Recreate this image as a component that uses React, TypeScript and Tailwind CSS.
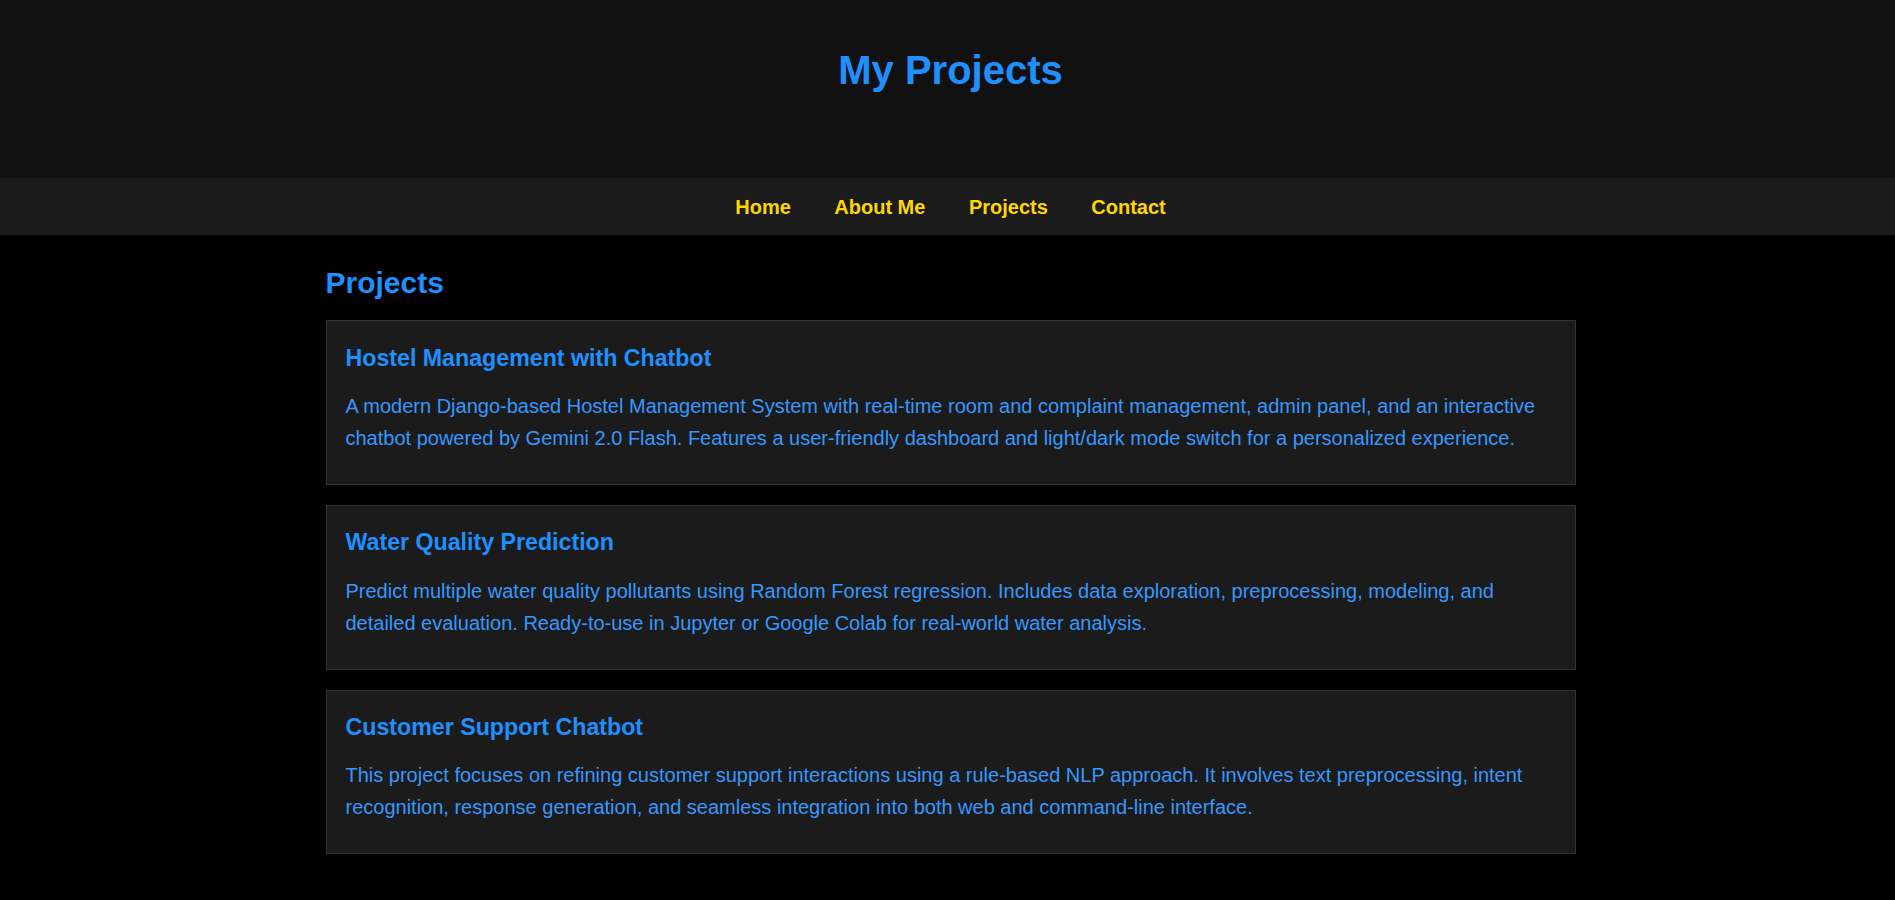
const projects = [
  {
    title: "Hostel Management with Chatbot",
    text: "A modern Django-based Hostel Management System with real-time room and complaint management, admin panel, and an interactive chatbot powered by Gemini 2.0 Flash. Features a user-friendly dashboard and light/dark mode switch for a personalized experience.",
  },
  {
    title: "Water Quality Prediction",
    text: "Predict multiple water quality pollutants using Random Forest regression. Includes data exploration, preprocessing, modeling, and detailed evaluation. Ready-to-use in Jupyter or Google Colab for real-world water analysis.",
  },
  {
    title: "Customer Support Chatbot",
    text: "This project focuses on refining customer support interactions using a rule-based NLP approach. It involves text preprocessing, intent recognition, response generation, and seamless integration into both web and command-line interface.",
  },
];

const links = ["Home", "About Me", "Projects", "Contact"];

export default function App() {
  return (
    <div className="min-h-[900px] bg-black font-['Liberation_Sans',Arial,sans-serif]">
      {/* Header */}
      <header className="h-[178px] bg-[#111111] pl-[6px] pt-[47px]">
        <h1 className="text-center text-[40px] font-bold leading-[46px] text-[#1e90ff]">
          My Projects
        </h1>
      </header>

      {/* Nav */}
      <nav className="flex h-[57px] items-center justify-center gap-[43.5px] bg-[#1b1b1b] pl-[6px]">
        {links.map((l) => (
          <a key={l} href="#" className="text-[20px] font-bold text-[#ffd700]">
            {l}
          </a>
        ))}
      </nav>

      {/* Projects */}
      <main className="pl-[6px] pb-[46px]">
        <div className="mx-auto w-[1250px] pt-[30.5px]">
          <h2 className="text-[30px] font-bold leading-[34.5px] text-[#1e90ff]">
            Projects
          </h2>
          <div className="mt-[20px] flex flex-col gap-[20px]">
            {projects.map((p) => (
              <div
                key={p.title}
                className="border border-[#333333] bg-[#1b1b1b] pl-[19px] pr-[20px] pt-[23.5px] pb-[30px]"
              >
                <h3 className="text-[23.2px] font-bold leading-[26.7px] text-[#1e90ff]">
                  {p.title}
                </h3>
                <p className="mt-[18.6px] text-[20px] leading-[32px] text-[#3399ff]">
                  {p.text}
                </p>
              </div>
            ))}
          </div>
        </div>
      </main>
    </div>
  );
}
